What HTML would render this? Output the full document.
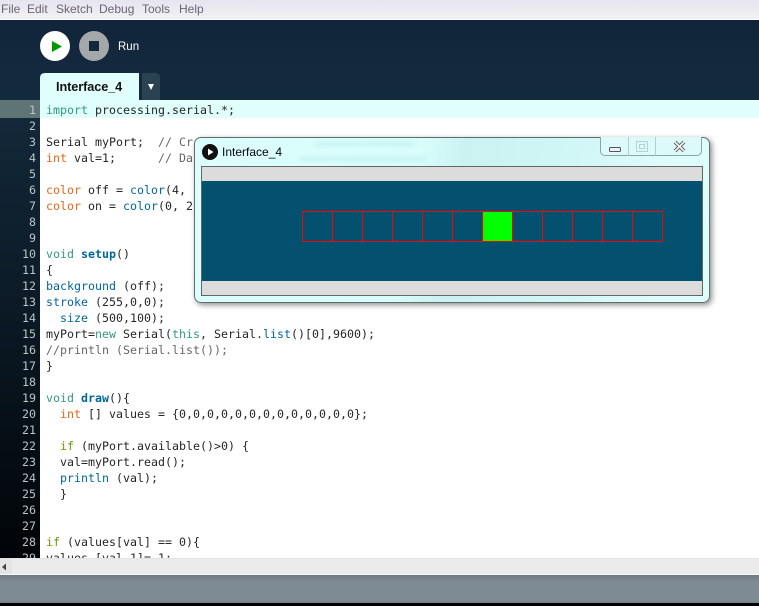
<!DOCTYPE html>
<html>
<head>
<meta charset="utf-8">
<style>
html,body{margin:0;padding:0;width:759px;height:606px;overflow:hidden;background:#000}
#root{position:relative;width:759px;height:606px;overflow:hidden;font-family:"Liberation Sans",sans-serif}
.a{position:absolute}
#menu{left:0;top:0;width:759px;height:19px;background:linear-gradient(#e6e4f0,#f1f1f3)}
#menu span{position:absolute;top:2px;font-size:12px;line-height:15px;color:#6d6470}
#wl{left:0;top:19px;width:759px;height:1px;background:#fff}
#hdr{left:0;top:20px;width:759px;height:80px;background:linear-gradient(#11253a,#14293d 60%,#132a3c)}
#gut{left:0;top:100px;width:40px;height:459px;background:linear-gradient(#14293b,#0b1a26 45%,#010407)}
#ed{left:40px;top:100px;width:719px;height:458px;background:#fff;overflow:hidden}
#hl{left:0;top:0;width:719px;height:18px;background:#e0fffc}
#glh{left:0;top:100px;width:40px;height:18px;background:#5f7575}
pre{margin:0;position:absolute;font-family:"DejaVu Sans Mono","Liberation Mono",monospace;font-size:11.63px;line-height:16px;letter-spacing:0}
#code{left:6px;top:2px;color:#262626}
#nums{left:0;top:102px;width:36px;height:456px;overflow:hidden;text-align:right;color:#b9c6c6}
.k{color:#33997e}.o{color:#e2661a}.b{color:#006699}.g{color:#669900}.c{color:#666666}
.bb{color:#006699;font-weight:bold}
#win{left:194px;top:137px;width:514px;height:164px;border:1px solid #5f6f6f;border-radius:7px;background:linear-gradient(100deg,#dcfffd,#d8fdfb 42%,#cbf2f1 50%,#d0f6f5 70%,#dcfbfa 85%,#e0fdfc);box-shadow:2px 2px 6px rgba(0,0,0,.45)}
#canvasf{left:201px;top:166px;width:500px;height:128px;background:#dcdcdc;border:1px solid #666}
#blue{left:202px;top:181px;width:500px;height:100px;background:#04506f}
#title{left:222px;top:144px;font-size:12px;line-height:16px;color:#050505}
#ctl{left:600px;top:137px;width:100px;height:18px;border:1px solid #8fa3a6;border-top:none;border-radius:0 0 5px 5px;background:#dcfafa}
#sb{left:0;top:558px;width:759px;height:17px;background:#ebebeb;border-top:1px solid #e2e2e2;border-bottom:1px solid #f8f8f8;box-sizing:border-box}
#st{left:0;top:575px;width:759px;height:28px;background:linear-gradient(#6f7a83,#7f8b94 25%,#7f8b94 90%,#757f88)}
#bk{left:0;top:603px;width:759px;height:3px;background:#000}
.gh{position:absolute;height:4px;background:#b4e8e6;filter:blur(2px);opacity:.55}
</style>
</head>
<body>
<div id="root">
<div class="a" id="menu">
<span style="left:1px">File</span><span style="left:27px">Edit</span><span style="left:56px">Sketch</span><span style="left:99px">Debug</span><span style="left:142px">Tools</span><span style="left:179px">Help</span>
</div>
<div class="a" id="wl"></div>
<div class="a" id="hdr"></div>
<svg class="a" style="left:0;top:0" width="200" height="100">
<circle cx="55" cy="46" r="15" fill="#fff"/>
<path d="M52 41 L62 46.500 L52 52 Z" fill="#009900"/>
<circle cx="94" cy="46" r="15" fill="#a4a8ab"/>
<rect x="89" y="41" width="10" height="10" fill="#14283c"/>
<path d="M40 100 V78 Q40 73 45 73 H139 V100 Z" fill="#e0fffc"/>
<path d="M142 100 V73 H155 Q160 73 160 78 V100 Z" fill="#2b4252"/>
<path d="M148 84 H154 L151 90 Z" fill="#fff"/>
</svg>
<div class="a" style="left:118px;top:40px;font-size:11.500px;line-height:14px;color:#fff">Run</div>
<div class="a" style="left:56px;top:79px;font-size:12.700px;line-height:16px;color:#111;font-weight:bold;letter-spacing:-.08px">Interface_4</div>

<div class="a" id="gut"></div>
<div class="a" id="glh"></div>
<pre class="a" id="nums">1
2
3
4
5
6
7
8
9
10
11
12
13
14
15
16
17
18
19
20
21
22
23
24
25
26
27
28
29</pre>
<div class="a" id="ed">
<div class="a" id="hl"></div>
<pre id="code"><span class="k">import</span> processing.serial.*;

Serial myPort;  <span class="c">// Cr</span>
<span class="o">int</span> val=1;      <span class="c">// Da</span>

<span class="o">color</span> off = <span class="b">color</span>(4,
<span class="o">color</span> on = <span class="b">color</span>(0, 2


<span class="k">void</span> <span class="bb">setup</span>()
{
<span class="b">background</span> (off);
<span class="b">stroke</span> (255,0,0);
  <span class="b">size</span> (500,100);
myPort=<span class="k">new</span> Serial(<span class="k">this</span>, Serial.<span class="b">list</span>()[0],9600);
<span class="c">//println (Serial.list());</span>
}

<span class="k">void</span> <span class="bb">draw</span>(){
  <span class="o">int</span> [] values = {0,0,0,0,0,0,0,0,0,0,0,0,0};

  <span class="g">if</span> (myPort.available()&gt;0) {
  val=myPort.read();
  <span class="b">println</span> (val);
  }


<span class="g">if</span> (values[val] == 0){
values [val-1]= 1;</pre>
</div>

<div class="a" id="sb"></div>
<div class="a" style="left:0;top:559px;width:12px;height:15px;background:#e4e4e4"></div>
<svg class="a" style="left:0;top:560px" width="12" height="14"><path d="M6 3.500 L2 7 L6 10.500 Z" fill="#444"/></svg>
<div class="a" id="st"></div>
<div class="a" id="bk"></div>

<div class="a" id="win"></div>
<div class="gh" style="left:315px;top:142px;width:100px"></div>
<div class="gh" style="left:300px;top:157px;width:125px"></div>
<div class="a" id="canvasf"></div>
<div class="a" id="blue"></div>
<svg class="a" style="left:302px;top:211px" width="362" height="31" shape-rendering="crispEdges">
<rect x="180" y="0" width="31" height="31" fill="#0f0"/>
<path d="M0.500 0.500 H360.500 V30.500 H0.500 Z M30.500 0 V31 M60.500 0 V31 M90.500 0 V31 M120.500 0 V31 M150.500 0 V31 M180.500 0 V31 M210.500 0 V31 M240.500 0 V31 M270.500 0 V31 M300.500 0 V31 M330.500 0 V31" fill="none" stroke="#f00" stroke-width="1"/>
</svg>
<svg class="a" style="left:201px;top:143px" width="18" height="18">
<circle cx="9" cy="9" r="8" fill="#111"/>
<path d="M7 5.500 L12.500 9 L7 12.500 Z" fill="#fff"/>
</svg>
<div class="a" id="title">Interface_4</div>
<div class="a" id="ctl"></div>
<div class="a" style="left:628px;top:137px;width:1px;height:19px;background:#b5cccd"></div>
<div class="a" style="left:655px;top:137px;width:1px;height:19px;background:#b5cccd"></div>
<svg class="a" style="left:600px;top:137px" width="104" height="20">
<rect x="9.500" y="10.500" width="11" height="4" rx="1" fill="#eef" stroke="#555"/>
<rect x="36.500" y="4.500" width="11" height="10" fill="none" stroke="#b4d4d4"/>
<rect x="39.500" y="7.500" width="5" height="4" fill="none" stroke="#b4d4d4"/>
<path d="M75 5 L84 14 M84 5 L75 14" stroke="#555" stroke-width="3.600" fill="none"/>
<path d="M75 5 L84 14 M84 5 L75 14" stroke="#f2f2f2" stroke-width="1.800" fill="none"/>
</svg>
</div>
</body>
</html>
